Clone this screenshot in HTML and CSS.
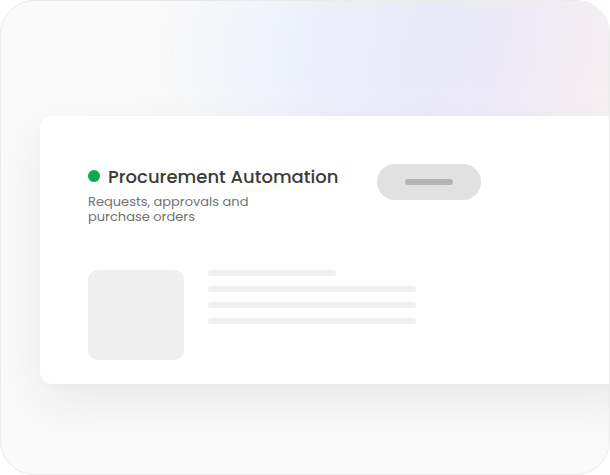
FILE: index.html
```html
<!DOCTYPE html>
<html>
<head>
<meta charset="utf-8">
<link rel="stylesheet" href="styles.css">
</head>
<body>
<div class="frame">
  <div class="glow"></div>
  <div class="card">
    <div class="head">
      <div class="titles">
        <div class="title-row">
          <span class="dot"></span>
          <span class="title">Procurement Automation</span>
        </div>
        <p class="sub">Requests, approvals and purchase orders</p>
      </div>
      <div class="pill"><span class="pill-bar"></span></div>
    </div>
    <div class="body">
      <div class="thumb"></div>
      <div class="lines">
        <span class="line short"></span>
        <span class="line"></span>
        <span class="line"></span>
        <span class="line"></span>
      </div>
    </div>
  </div>
</div>
</body>
</html>
```
FILE: styles.css
```css
* { box-sizing: border-box; }
html, body { margin: 0; padding: 0; background: #ffffff; }
body { font-family: "Poppins", "Inter", "Open Sans", sans-serif; }

.frame {
  position: relative;
  width: 610px;
  height: 475px;
  border: 1px solid #ebebeb;
  border-radius: 34px;
  background: #fafafa;
  overflow: hidden;
  padding: 115px 0 0 39px;
}

.glow {
  position: absolute;
  left: 170px;
  top: -50px;
  width: 520px;
  height: 190px;
  border-radius: 40%;
  background: linear-gradient(100deg, rgba(240,244,252,0) 0%, #eef2fb 22%, #e8eaf7 45%, #ebe8f6 62%, #f6eef1 82%, #f9efec 100%);
  filter: blur(28px);
}

.card {
  position: relative;
  width: 600px;
  height: 268px;
  background: #ffffff;
  border-radius: 12px;
  box-shadow: 0 18px 50px rgba(0,0,0,0.07), 0 2px 10px rgba(0,0,0,0.02);
  padding: 49px 0 0 48px;
}

.head {
  display: flex;
  align-items: flex-start;
}

.titles { width: 289px; }

.title-row {
  display: flex;
  align-items: center;
  gap: 8px;
  height: 22px;
}

.dot {
  width: 12px;
  height: 12px;
  border-radius: 50%;
  background: #0ba753;
  flex: none;
}

.title {
  font-size: 18px;
  font-weight: 500;
  color: #3a3a3a;
  white-space: nowrap;
}

.sub {
  margin: 7px 0 0;
  width: 185px;
  font-size: 13px;
  line-height: 15px;
  font-weight: 400;
  color: #727272;
}

.pill {
  margin-top: -1px;
  width: 104px;
  height: 36px;
  border-radius: 18px;
  background: #e1e1e1;
  display: flex;
  align-items: center;
  justify-content: center;
}

.pill-bar {
  width: 48px;
  height: 6px;
  border-radius: 3px;
  background: #b4b4b4;
}

.body {
  display: flex;
  gap: 24px;
  margin-top: 46px;
}

.thumb {
  width: 96px;
  height: 90px;
  border-radius: 10px;
  background: #efefef;
}

.lines {
  display: flex;
  flex-direction: column;
  gap: 10px;
}

.line {
  display: block;
  width: 208px;
  height: 6px;
  border-radius: 3px;
  background: #f0f0f0;
}

.line.short { width: 128px; }
```
